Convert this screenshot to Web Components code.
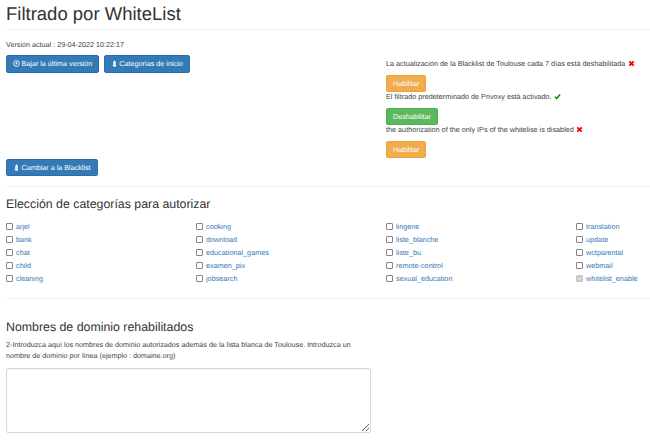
<!DOCTYPE html>
<html lang="es"><head><meta charset="utf-8"><title>Filtrado por WhiteList</title>
<style>
html,body{margin:0;padding:0;background:#fff;height:441px;overflow:hidden}
body{font-family:"Liberation Sans",Arial,sans-serif;font-size:7.2px;line-height:11px;color:#444;text-rendering:geometricPrecision}
</style></head><body>
<wl-page></wl-page>
<template id="t-btn"><style>
:host{display:inline-flex;box-sizing:border-box;height:17.5px;align-items:center;padding:0 6px;border-radius:2px;font-size:7.2px;color:#fff;background:#337ab7;border:1px solid #2e6da4;white-space:nowrap;gap:1.5px}
:host([kind=warn]){background:#f0ad4e;border-color:#eea236}
:host([kind=ok]){background:#5cb85c;border-color:#4cae4c}
svg{width:7px;height:7px;fill:none;stroke:#fff;display:block}
</style><span id="i"></span><slot></slot></template>
<template id="t-st"><style>
:host{display:block;height:10px;line-height:10px;font-size:7.25px;color:#444;white-space:nowrap}
svg{width:7px;height:7px;vertical-align:-1px;margin-left:2.5px}
</style><slot></slot><span id="i"></span></template>
<template id="t-cat"><style>
:host{display:flex;align-items:center;height:13px;font-size:7.25px;color:#337ab7;gap:3px;white-space:nowrap}
i{box-sizing:border-box;width:7px;height:7px;border:1px solid #858585;border-radius:1px;background:#fff;display:flex;align-items:center;justify-content:center;flex:none}
:host([checked]) i{background:#c8c8c8;border-color:#c8c8c8}
svg{width:5px;height:5px;display:block}
</style><i id="b"></i><slot></slot></template>
<template id="t-page"><style>
:host{display:block;padding:0 6px;height:441px;box-sizing:border-box;overflow:hidden}
h1{font-size:18.5px;line-height:26px;font-weight:400;margin:0;padding-top:1px;color:#333;white-space:nowrap}
h3{font-size:12.35px;line-height:15px;font-weight:400;margin:0;color:#333}
hr{border:0;border-top:1px solid #eee;margin:0 -6px 0 0}
.hd{margin-top:2px}
.ver{margin-top:9px;height:12px;line-height:12px}
.top{display:grid;grid-template-columns:380px 1fr;height:146px}
.left{display:flex;flex-direction:column}
.btns{display:flex;gap:4.5px;margin-top:4px}
.sw{margin-top:auto}
.right{padding-top:29px;display:flex;flex-direction:column}
.right wl-btn{align-self:flex-start;margin-top:5.5px}
.cats{display:grid;grid-template-columns:repeat(4,190px);margin-top:8px;height:65px}
.cats>div{display:flex;flex-direction:column}
textarea{display:block;box-sizing:border-box;width:365px;height:65px;border:1px solid #d8d8d8;border-radius:2px;margin-top:7px;background:#fff;padding:0;box-shadow:inset 0 1px 1px rgba(0,0,0,.05)}
p{margin:0;width:365px;line-height:11px;color:#444}
</style>
<h1>Filtrado por WhiteList</h1>
<hr class="hd">
<section class="top">
<div class="left">
<div class="ver">Versión actual : 29-04-2022 10:22:17</div>
<div class="btns"><wl-btn icon="dl">Bajar la última versión</wl-btn><wl-btn icon="leaf">Categorías de inicio</wl-btn></div>
<div class="sw"><wl-btn icon="leaf">Cambiar a la Blacklist</wl-btn></div>
</div>
<div class="right">
<wl-status state="no">La actualización de la Blacklist de Toulouse cada 7 días está deshabilitada</wl-status>
<wl-btn kind="warn">Habilitar</wl-btn>
<wl-status state="ok">El filtrado predeterminado de Privoxy está activado.</wl-status>
<wl-btn kind="ok">Deshabilitar</wl-btn>
<wl-status state="no">the authorization of the only IPs of the whitelise is disabled</wl-status>
<wl-btn kind="warn">Habilitar</wl-btn>
</div>
</section>
<hr style="margin-top:10px">
<h3 style="margin-top:10px">Elección de categorías para autorizar</h3>
<div class="cats">
<div><wl-cat>arjel</wl-cat><wl-cat>bank</wl-cat><wl-cat>chat</wl-cat><wl-cat>child</wl-cat><wl-cat>cleaning</wl-cat></div>
<div><wl-cat>cooking</wl-cat><wl-cat>download</wl-cat><wl-cat>educational_games</wl-cat><wl-cat>examen_pix</wl-cat><wl-cat>jobsearch</wl-cat></div>
<div><wl-cat>lingerie</wl-cat><wl-cat>liste_blanche</wl-cat><wl-cat>liste_bu</wl-cat><wl-cat>remote-control</wl-cat><wl-cat>sexual_education</wl-cat></div>
<div><wl-cat>translation</wl-cat><wl-cat>update</wl-cat><wl-cat>wctparental</wl-cat><wl-cat>webmail</wl-cat><wl-cat checked>whitelist_enable</wl-cat></div>
</div>
<hr style="margin-top:13px">
<h3 style="margin-top:21px">Nombres de dominio rehabilitados</h3>
<p style="margin-top:4px">2-Introduzca aquí los nombres de dominio autorizados además de la lista blanca de Toulouse. Introduzca un nombre de dominio por línea (ejemplo : domaine.org)</p>
<textarea></textarea>
</template>
<script>
const NS='http://www.w3.org/2000/svg';
const svg=(vb,inner)=>`<svg viewBox="${vb}" xmlns="${NS}">${inner}</svg>`;
const ICONS={
 dl:svg('0 0 16 16','<circle cx="8" cy="8" r="6.5" stroke-width="2"/><path d="M5 7h2V4h2v3h2l-3 4z" fill="#fff" stroke="none"/>'),
 leaf:svg('0 0 16 16','<path d="M8 0.5C9.5 3 11.5 5.5 11.5 7.5c0 1-.5 1.6-1 2 1 .6 1.5 1.4 1.5 2.5 0 2-1.8 3.5-4 3.5s-4-1.5-4-3.5c0-1.100.5-1.900 1.500-2.500-.5-.4-1-1-1-2C4.500 5.500 6.500 3 8 .5z" fill="#fff" stroke="none"/><path d="M4 9.200h8" stroke="#337ab7" stroke-width="1"/>'),
 no:svg('0 0 16 16','<path d="M3 3l10 10M13 3L3 13" stroke="#f00" stroke-width="4.4" fill="none"/>'),
 ok:svg('0 0 16 16','<path d="M2 8.5l4 4L14 3.5" stroke="#080" stroke-width="3.6" fill="none"/>')
};
function def(name,tid,init){customElements.define(name,class extends HTMLElement{constructor(){super();const r=this.attachShadow({mode:'open'});r.appendChild(document.getElementById(tid).content.cloneNode(true));}connectedCallback(){init&&init(this,this.shadowRoot)}})}
def('wl-btn','t-btn',(h,r)=>{const i=r.getElementById('i');const k=h.getAttribute('icon');if(k)i.innerHTML=ICONS[k];else i.remove();});
def('wl-status','t-st',(h,r)=>{r.getElementById('i').innerHTML=ICONS[h.getAttribute('state')];});
def('wl-cat','t-cat',(h,r)=>{if(h.hasAttribute('checked'))r.getElementById('b').innerHTML=svg('0 0 16 16','<path d="M2 8l4 4 8-9" stroke="#fff" stroke-width="3" fill="none"/>');});
def('wl-page','t-page');
</script>
</body></html>
